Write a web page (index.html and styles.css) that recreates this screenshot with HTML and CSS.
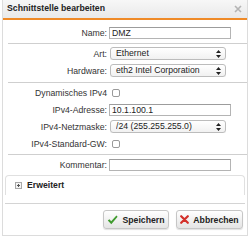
FILE: index.html
```html
<!DOCTYPE html>
<html lang="de">
<head>
  <meta charset="UTF-8" />
  <title>Schnittstelle bearbeiten</title>
  <link rel="stylesheet" href="styles.css">
</head>
<body>

<div class="dialog">
  <div class="titlebar">
    <span class="title">Schnittstelle bearbeiten</span>
    <span class="close">
      <svg width="8" height="8" viewBox="0 0 8 8"><path d="M1 1 L7 7 M7 1 L1 7" stroke="#b4b4b4" stroke-width="1.6" /></svg>
    </span>
  </div>

  <div class="section first">
    <div class="row">
      <label>Name:</label>
      <input type="text" class="field" value="DMZ" />
    </div>
  </div>

  <div class="section second">
    <div class="row">
      <label>Art:</label>
      <span class="select-wrap">
        <select class="select"><option>Ethernet</option></select>
        <svg class="arrows" width="5" height="8" viewBox="0 0 5 8"><path d="M2.5 0 L5 3 H0 Z M2.5 8 L5 5 H0 Z" fill="#222" /></svg>
      </span>
    </div>
    <div class="row">
      <label>Hardware:</label>
      <span class="select-wrap">
        <select class="select"><option>eth2 Intel Corporation</option></select>
        <svg class="arrows" width="5" height="8" viewBox="0 0 5 8"><path d="M2.5 0 L5 3 H0 Z M2.5 8 L5 5 H0 Z" fill="#222" /></svg>
      </span>
    </div>
  </div>

  <div class="section third">
    <div class="row">
      <label>Dynamisches IPv4</label>
      <input type="checkbox" class="check" />
    </div>
    <div class="row">
      <label>IPv4-Adresse:</label>
      <input type="text" class="field" value="10.1.100.1" />
    </div>
    <div class="row">
      <label>IPv4-Netzmaske:</label>
      <span class="select-wrap">
        <select class="select"><option>/24 (255.255.255.0)</option></select>
        <svg class="arrows" width="5" height="8" viewBox="0 0 5 8"><path d="M2.5 0 L5 3 H0 Z M2.5 8 L5 5 H0 Z" fill="#222" /></svg>
      </span>
    </div>
    <div class="row">
      <label>IPv4-Standard-GW:</label>
      <input type="checkbox" class="check" />
    </div>
  </div>

  <div class="section fourth">
    <div class="row">
      <label>Kommentar:</label>
      <input type="text" class="field" value="" />
    </div>
    <div class="advanced">
      <span class="plus">
        <svg width="7" height="7" viewBox="0 0 7 7"><rect x="0.5" y="0.5" width="6" height="6" fill="#f4f4f4" stroke="#a8a8a8" /><path d="M2 3.5 H5 M3.5 2 V5" stroke="#555" stroke-width="1" /></svg>
      </span>
      <span class="advanced-label">Erweitert</span>
    </div>
  </div>

  <div class="footer">
    <button class="btn save">
      <svg width="11" height="10" viewBox="0 0 11 10"><path d="M0.8 5.6 L2.4 4.2 L4.2 6.2 L9.4 0.6 L10.6 1.8 L4.3 9.2 Z" fill="#3f9b2e" /></svg>
      Speichern
    </button>
    <button class="btn cancel">
      <svg width="9" height="9" viewBox="0 0 9 9"><path d="M1.2 1.2 L7.8 7.8 M7.8 1.2 L1.2 7.8" stroke="#d3302a" stroke-width="2.2" stroke-linecap="round" /></svg>
      Abbrechen
    </button>
  </div>
</div>

</body>
</html>
```

FILE: styles.css
```css
* {
  box-sizing: border-box;
}

body {
  margin: 0;
  background: #fff;
  font-family: 'Liberation Sans', Arial, sans-serif;
  font-size: 8.7px;
  color: #333;
}

.dialog {
  width: 246px;
  margin-left: 2px;
  border: 1px solid #dcdcdc;
  border-top: 0;
  background: #fff;
}

.titlebar {
  height: 20px;
  display: flex;
  align-items: center;
  justify-content: space-between;
  padding: 0 5px 2px 4px;
  background: linear-gradient(#f7f7f7, #e9e9e9);
  border-bottom: 2px solid #ef8a27;
}

.title {
  font-weight: bold;
  color: #222;
}

.close {
  display: flex;
  margin-top: 1px;
}

.section {
  margin-left: 5px;
  border-bottom: 1px solid #cfcfcf;
}

.section .row {
  margin-left: -5px;
}

.first {
  padding: 4px 0 2px;
}

.second {
  padding: 1px 0 3px;
}

.third {
  padding: 1px 0 2px;
}

.fourth {
  margin-left: 0;
  padding-top: 1px;
  border-bottom: 0;
}

.fourth .row {
  margin-left: 0;
}

.row {
  display: grid;
  grid-template-columns: 104px 1fr;
  column-gap: 2px;
  align-items: center;
  height: 17px;
}

.row label {
  text-align: right;
  color: #333;
  white-space: nowrap;
}

.field {
  width: 122px;
  height: 12px;
  padding: 0 2px;
  border: 1px solid #b4b4b4;
  border-top-color: #9c9c9c;
  font-family: inherit;
  font-size: 8.7px;
  color: #222;
  outline: none;
}

.select-wrap {
  position: relative;
  width: 116px;
  height: 13px;
  margin-left: 1px;
  overflow: hidden;
}

.select {
  appearance: none;
  -webkit-appearance: none;
  width: 116px;
  height: 13px;
  padding: 0 14px 0 5px;
  border: 1px solid #bcbcbc;
  border-radius: 3px;
  background: linear-gradient(#ffffff, #f1f1f1);
  box-shadow: 0 1px 0 rgba(0, 0, 0, 0.06);
  font-family: inherit;
  font-size: 8.7px;
  color: #222;
  line-height: 11px;
}

.arrows {
  position: absolute;
  right: 5px;
  top: 2.5px;
  pointer-events: none;
}

.check {
  appearance: none;
  -webkit-appearance: none;
  width: 8px;
  height: 8px;
  margin: 0 0 0 3px;
  border: 1px solid #9a9a9a;
  border-radius: 2px;
  background: #fff;
}

.advanced {
  display: flex;
  align-items: center;
  gap: 5px;
  height: 20px;
  margin: 2px 2px 0 2px;
  padding: 0 0 1px 9px;
  border: 1px solid #e0e0e0;
  border-bottom: 0;
  border-radius: 4px 4px 0 0;
}

.plus {
  display: flex;
}

.advanced-label {
  font-weight: bold;
  color: #222;
}

.footer {
  display: flex;
  justify-content: flex-end;
  gap: 7px;
  margin: 8px 2px 0 2px;
  padding: 6px 2px 6px 0;
  border-top: 1px solid #d4d4d4;
}

.btn {
  display: inline-flex;
  align-items: center;
  justify-content: center;
  gap: 4px;
  height: 19px;
  padding: 0;
  border: 1px solid #c6c6c6;
  border-radius: 3px;
  background: linear-gradient(#ffffff, #e4e4e4);
  box-shadow: 0 1px 1px rgba(0, 0, 0, 0.12);
  font-family: inherit;
  font-size: 8.7px;
  font-weight: bold;
  color: #222;
}

.save {
  width: 66px;
}

.cancel {
  width: 67px;
}
```
